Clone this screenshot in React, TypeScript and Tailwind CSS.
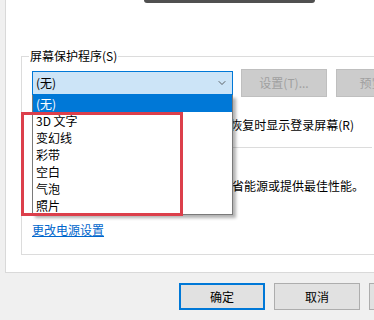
import {ChevronDown} from 'lucide-react';

const items = ['(无)', '3D 文字', '变幻线', '彩带', '空白', '气泡', '照片'];

export default function App() {
  return (
    <div className="relative flex h-[320px] w-[374px] overflow-hidden bg-[#f0f0f0] font-['Noto_Sans_CJK_SC','Noto_Sans',sans-serif] text-[12px] leading-[14px] text-black">
      <div className="w-px bg-[#d0d0d0]" />
      <div className="w-[2px] bg-[#6e6e6e]" />
      <div className="flex flex-1 flex-col pl-[5px]">
        <div className="flex h-[273px] flex-col border-b border-l border-[#d9d9d9] bg-white">
          {/* monitor preview bottom */}
          <div className="ml-[138px] h-[3px] w-[171px] rounded-b-[3px] bg-[#505050]" />

          <fieldset className="ml-[15px] mt-[46px] w-[380px] border border-[#dcdcdc]">
            <legend className="ml-[7px] px-px leading-[14px]">屏幕保护程序(S)</legend>

            <div className="pb-[17px] pl-[10px]">
              <div className="mt-[6px] flex items-center gap-[8px]">
                <div className="relative">
                  <div className="flex h-[24px] w-[201px] items-center justify-between border border-[#0078d7] bg-[#cce4f7] pl-[3px] pr-[4px]">
                    <span>(无)</span>
                    <ChevronDown className="h-[12px] w-[12px] text-[#333]" strokeWidth={1.5} />
                  </div>
                  <div className="absolute left-0 top-full z-10 w-[201px] border border-t-0 border-[#7a7a7a] bg-white shadow-[3px_3px_3px_rgba(0,0,0,0.3)]">
                    {items.map((it, i) => (
                      <div
                        key={it}
                        className={
                          i === 0
                            ? 'h-[17px] bg-[#0078d7] pl-[3px] leading-[17px] text-white'
                            : 'h-[17px] pl-[3px] leading-[17px]'
                        }
                      >
                        {it}
                      </div>
                    ))}
                  </div>
                </div>
                <button className="h-[28px] w-[86px] border border-[#bfbfbf] bg-[#cccccc] text-[#a0a0a0]">
                  设置(T)...
                </button>
                <button className="ml-px h-[28px] w-[86px] border border-[#bfbfbf] bg-[#cccccc] text-[#a0a0a0]">
                  预览(V)
                </button>
              </div>

              <div className="mt-[21px] flex w-[322px] justify-end overflow-hidden whitespace-nowrap">
                <span>等待(W): 1 分钟 在恢复时显示登录屏幕(R)</span>
              </div>

              <div className="mt-[15px] h-px w-[340px] bg-[#dcdcdc]" />

              <div className="mt-[31px] flex w-[332px] justify-end overflow-hidden whitespace-nowrap">
                <span>通过调整显示亮度和其他电源设置以节省能源或提供最佳性能。</span>
              </div>

              <a href="#" className="mt-[30px] block w-fit text-[#0066cc] underline">
                更改电源设置
              </a>
            </div>
          </fieldset>
        </div>

        <div className="ml-[174px] mt-[10px] flex gap-[9px]">
          <button className="h-[27px] w-[86px] border-2 border-[#0078d7] bg-[#e1e1e1]">确定</button>
          <button className="h-[27px] w-[86px] border border-[#adadad] bg-[#e1e1e1]">取消</button>
          <button className="h-[27px] w-[86px] border border-[#adadad] bg-[#e1e1e1]">应用(A)</button>
        </div>
      </div>

      {/* annotation */}
      <div className="absolute left-[21px] top-[112px] z-20 h-[104px] w-[162px] border-[3px] border-[#dc3f4b]" />
    </div>
  );
}
